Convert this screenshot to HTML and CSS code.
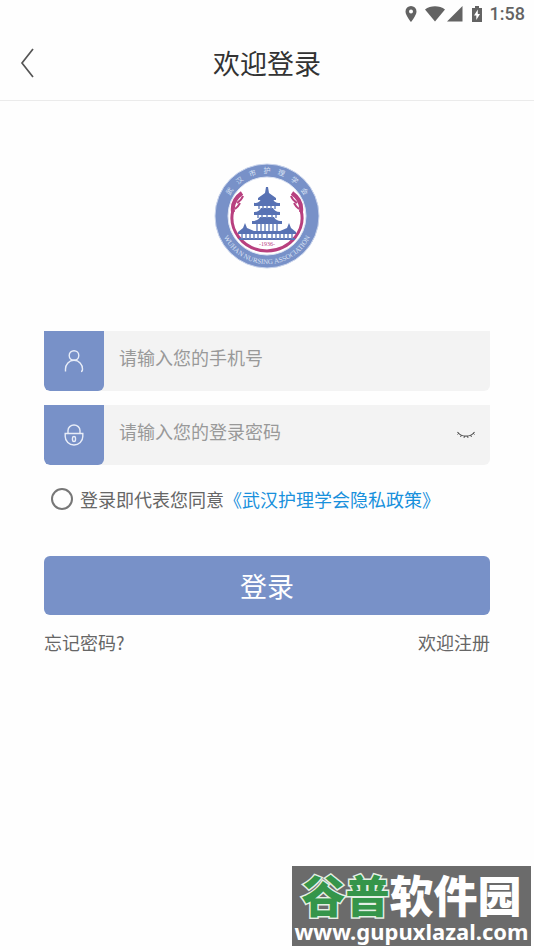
FILE: index.html
```html
<!DOCTYPE html>
<html lang="zh-CN">

<head>
    <meta charset="UTF-8">
    <meta name="viewport" content="width=device-width, initial-scale=1.0">
    <title>欢迎登录</title>
    <link rel="stylesheet" href="styles.css">
</head>

<body>
    <div class="status-bar">
        <svg class="status-icon" width="12" height="16" viewBox="0 0 12 16">
            <path fill="#636363" fill-rule="evenodd" d="M6 0a5.500 5.500 0 0 0-5.500 5.500C.5 9.600 6 16 6 16s5.500-6.400 5.500-10.500A5.500 5.500 0 0 0 6 0zm0 3.500a2 2 0 1 1 0 4 2 2 0 0 1 0-4z" />
        </svg>
        <svg class="status-icon wifi" width="20" height="16" viewBox="0 0 20 16">
            <path fill="#636363" d="M0 3.500C5.500-.8 14.500-.8 20 3.500L10 15.500z" />
        </svg>
        <svg class="status-icon signal" width="16" height="16" viewBox="0 0 16 16">
            <path fill="#636363" d="M15.500 0v15.500H0z" />
        </svg>
        <svg class="status-icon battery" width="10" height="16" viewBox="0 0 10 16">
            <path fill="#636363" d="M3 0h4v2h3v14H0V2h3z" />
            <path fill="#fff" d="M5.800 3.500L2 9.500h2.300v4.500L8 8H5.800z" />
        </svg>
        <span class="time">1:58</span>
    </div>

    <header class="header">
        <button type="button" class="back" aria-label="返回">
            <svg width="14" height="30" viewBox="0 0 14 30">
                <path d="M13 1L2 15l11 14" fill="none" stroke="#555" stroke-width="1.700" />
            </svg>
        </button>
        <h1>欢迎登录</h1>
    </header>

    <main class="container">
        <svg class="logo" width="108" height="108" viewBox="0 0 108 108" role="img" aria-label="武汉市护理学会">
            <defs>
                <path id="arc-top" d="M14 66a42 42 0 1 1 80 0" />
                <path id="arc-bottom" d="M6 54a48 48 0 0 0 96 0" />
            </defs>
            <circle cx="54" cy="54" r="52" fill="#7891c8" stroke="#c9d4ec" stroke-width="1" />
            <circle cx="54" cy="54" r="39" fill="#fff" stroke="#dde4f3" stroke-width="1" />
            <text class="logo-cn">
                <textPath href="#arc-top" startOffset="50%" text-anchor="middle">武　汉　市　护　理　学　会</textPath>
            </text>
            <text class="logo-en">
                <textPath href="#arc-bottom" startOffset="50%" text-anchor="middle">WUHAN NURSING ASSOCIATION</textPath>
            </text>

            <!-- laurel ring -->
            <g fill="none" stroke="#b8407f">
                <path stroke-width="3" d="M20 48C15 67 29 88 54 89C79 88 93 67 88 48" />
                <path stroke-width="4" d="M20 50c-1-7 2-14 9-19M88 50c1-7-2-14-9-19" />
                <path stroke-width="2" d="M24 41c3-2 5-4 6-7M22 47c3-2 4-4 5-6M84 41c-3-2-5-4-6-7M86 47c-3-2-4-4-5-6" />
            </g>

            <!-- tower -->
            <g fill="#5872b4">
                <path d="M53 25h2l1 6 7 5v2H45v-2l7-5z" />
                <path d="M41 41c5 0 6-2 7-4h12c1 2 2 4 7 4v3H41z" />
                <path d="M41 50c4 0 6-2 7-4h12c1 2 3 4 7 4v3H41z" />
                <path d="M39 59c5 0 7-2 8-4h14c1 2 3 4 8 4v3H39z" />
                <path d="M25 70l5-4 2-5 2 5 7 3h26l7-3 2-5 2 5 5 4v2H25z" />
                <path d="M26 76h56v2H26z" />
            </g>
            <g stroke="#6f87c0" stroke-width="1.500">
                <path d="M46 44v3M50 44v3M54 44v3M58 44v3M62 44v3M45 53v3M49 53v3M54 53v3M59 53v3M63 53v3" />
                <path d="M44 62v7M48 62v7M52 62v7M56 62v7M60 62v7M64 62v7" />
                <path d="M29 72v5M33 72v5M37 72v5M41 72v5M45 72v5M49 72v5M54 72v5M59 72v5M63 72v5M67 72v5M71 72v5M75 72v5M79 72v5" />
            </g>
            <text class="logo-year" x="54" y="84" text-anchor="middle">-1936-</text>
        </svg>

        <form class="login-form">
            <div class="input-group">
                <label for="phone" aria-label="手机号">
                    <svg width="20" height="24" viewBox="0 0 20 24" fill="none" stroke="#e8edf8" stroke-width="1.400">
                        <circle cx="10" cy="6.500" r="4.800" />
                        <path d="M1.500 22.500v-2.500c0-4.500 3.500-8.700 8.500-8.700s8.500 4.200 8.500 8.700c0 1.500-.3 2.500-1.500 2.500" />
                    </svg>
                </label>
                <input type="tel" id="phone" placeholder="请输入您的手机号">
            </div>

            <div class="input-group">
                <label for="password" aria-label="登录密码">
                    <svg width="20" height="24" viewBox="0 0 20 24" fill="none" stroke="#e8edf8" stroke-width="1.400">
                        <path d="M4 10V7.500a6 5.500 0 0 1 12 0V10" />
                        <path d="M1.200 10.500h17.600v3a8.800 8.500 0 0 1-17.600 0z" />
                        <rect x="8.500" y="13.500" width="3" height="5" rx="1.500" />
                    </svg>
                </label>
                <input type="password" id="password" placeholder="请输入您的登录密码">
                <button type="button" class="toggle" aria-label="显示密码">
                    <svg width="20" height="10" viewBox="0 0 20 10" fill="none" stroke="#555">
                        <path stroke-width="1.200" d="M1.500 2c4 5.500 13 5.500 17 0" />
                        <path d="M3 3L1.500 4.500M5.500 5l-1 2M8.500 6l-.5 2M11.500 6l.5 2M14.500 5l1 2M17 3l1.500 1.500" />
                    </svg>
                </button>
            </div>

            <div class="agree">
                <input type="checkbox" id="agree">
                <label for="agree">登录即代表您同意</label><a href="#">《武汉护理学会隐私政策》</a>
            </div>

            <button type="submit" class="submit">登录</button>

            <div class="links">
                <a href="#">忘记密码?</a>
                <a href="#">欢迎注册</a>
            </div>
        </form>
    </main>

    <div class="watermark">
        <div class="site-name"><span>谷普</span>软件园</div>
        <div class="site-url">www.gupuxlazal.com</div>
    </div>
</body>

</html>
```
FILE: styles.css
```css
* {
    margin: 0;
    padding: 0;
    box-sizing: border-box;
}

body {
    min-height: 100vh;
    background: #fefefe;
    font-family: 'Noto Sans CJK SC', sans-serif;
    font-size: 18px;
    color: #666;
}

button,
input {
    font-family: inherit;
    border: none;
    outline: none;
}

button {
    cursor: pointer;
}

a {
    color: inherit;
    text-decoration: none;
}

svg {
    display: block;
}

/* status bar */
.status-bar {
    height: 27px;
    padding-right: 9px;
    display: flex;
    justify-content: flex-end;
    align-items: center;
}

.wifi {
    margin-left: 8px;
}

.signal {
    margin-left: 2px;
}

.battery {
    margin-left: 9px;
}

.time {
    margin-left: 8px;
    font-family: Roboto, sans-serif;
    font-size: 18px;
    font-weight: 500;
    color: #636363;
}

/* header */
.header {
    height: 74px;
    padding: 0 20px 2px;
    border-bottom: 1px solid #ebebeb;
    display: grid;
    grid-template-columns: 40px 1fr 40px;
    align-items: center;
}

.back {
    height: 40px;
    background: none;
}

.header h1 {
    font-size: 27px;
    line-height: 40px;
    font-weight: 400;
    text-align: center;
    color: #333;
}

.container {
    padding: 61px 44px 0;
}

.logo {
    margin: 0 auto 61px;
}

.logo-cn {
    font-size: 7px;
    fill: #dbe3f4;
}

.logo-en {
    font-family: 'Liberation Serif', serif;
    font-size: 7px;
    fill: #dbe3f4;
}

.logo-year {
    font-family: 'Liberation Serif', serif;
    font-size: 6px;
    fill: #b8407f;
}

/* form */
.input-group {
    height: 60px;
    margin-bottom: 14px;
    display: flex;
    background: #f3f3f3;
    border-radius: 0 0 6px 6px;
    overflow: hidden;
}

.input-group label {
    width: 60px;
    display: flex;
    justify-content: center;
    align-items: center;
    background: #7891c8;
    border-radius: 0 0 6px 6px;
}

.input-group input {
    flex: 1;
    min-width: 0;
    padding: 0 15px 8px;
    font-size: 18px;
    color: #333;
    background: none;
}

.input-group input::placeholder {
    color: #999;
}

.toggle {
    width: 48px;
    display: flex;
    justify-content: center;
    align-items: center;
    background: none;
}

.agree {
    height: 40px;
    padding-left: 7px;
    display: flex;
    align-items: center;
    white-space: nowrap;
}

.agree input {
    width: 22px;
    height: 22px;
    margin-right: 7px;
    appearance: none;
    border: 2px solid #777;
    border-radius: 50%;
}

.agree input:checked {
    background: #7891c8;
}

.agree a {
    color: #1890dc;
}

.submit {
    width: 100%;
    height: 59px;
    margin-top: 37px;
    font-size: 27px;
    color: #fff;
    background: #7891c8;
    border-radius: 6px;
}

.links {
    margin-top: 14px;
    display: flex;
    justify-content: space-between;
}

/* watermark */
.watermark {
    position: absolute;
    right: 3px;
    bottom: 4px;
    width: 239px;
    padding: 4px 0 2px;
    background: #6b6b6b;
    color: #fff;
    text-align: center;
    white-space: nowrap;
}

.site-name {
    font-size: 44px;
    line-height: 48px;
    font-weight: 900;
}

.site-name span {
    color: #35954a;
    -webkit-text-stroke: 3px #e4efe5;
    paint-order: stroke fill;
}

.site-url {
    font-family: 'Noto Sans', sans-serif;
    font-size: 22px;
    line-height: 26px;
    font-weight: 700;
}
```
